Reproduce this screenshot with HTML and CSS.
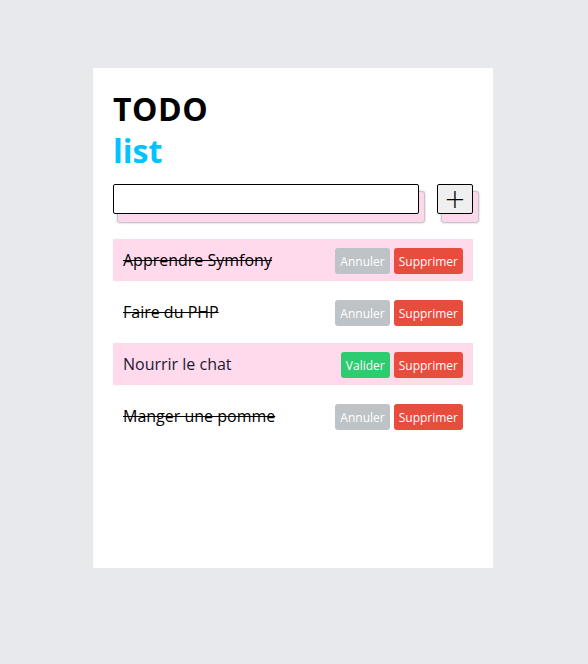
FILE: index.html
```html
<!DOCTYPE html>
<html>
<head>
<meta charset="utf-8">
<link rel="stylesheet" href="styles.css">
</head>
<body>
<div class="card">
  <h1 class="title"><span class="todo">TODO</span><span class="list">list</span></h1>
  <form class="add">
    <input class="field" type="text">
    <button class="plus" type="button">+</button>
  </form>
  <ul class="items">
    <li class="item pink done"><span class="label">Apprendre Symfony</span><span class="actions"><button class="btn grey">Annuler</button><button class="btn red">Supprimer</button></span></li>
    <li class="item done"><span class="label">Faire du PHP</span><span class="actions"><button class="btn grey">Annuler</button><button class="btn red">Supprimer</button></span></li>
    <li class="item pink"><span class="label">Nourrir le chat</span><span class="actions"><button class="btn green">Valider</button><button class="btn red">Supprimer</button></span></li>
    <li class="item done"><span class="label">Manger une pomme</span><span class="actions"><button class="btn grey">Annuler</button><button class="btn red">Supprimer</button></span></li>
  </ul>
</div>
</body>
</html>
```
FILE: styles.css
```css
html, body { margin: 0; padding: 0; }
body {
  background: #e8e9ed;
  font-family: "Open Sans", sans-serif;
  padding: 68px 2px 0 0;
  min-height: 664px;
  box-sizing: border-box;
}
.card {
  width: 400px;
  height: 500px;
  box-sizing: border-box;
  margin: 0 auto;
  background: #fff;
  padding: 20px;
}
.title {
  margin: 0;
  font-size: 32px;
  line-height: 42px;
  font-weight: 700;
}
.todo { display: block; color: #000; letter-spacing: 0.5px; }
.list { display: block; color: #00c3ff; }
.add {
  display: flex;
  gap: 18px;
  margin: 12px 0 0;
}
.field {
  flex: 1;
  height: 30px;
  box-sizing: border-box;
  border: 1px solid #000;
  border-radius: 2px;
  margin: 0;
  padding: 0 4px;
  background: #fff;
  box-shadow: 5px 8px 0 #fdd8ec, 5px 8px 2px 1px rgba(0,0,0,0.3);
}
.plus {
  width: 36px;
  height: 30px;
  box-sizing: border-box;
  margin: 0;
  padding: 0;
  border: 1px solid #000;
  border-radius: 2px;
  background: #efefef;
  font-family: "DejaVu Sans", sans-serif;
  font-size: 26px;
  font-weight: 300;
  line-height: 26px;
  color: #000;
  box-shadow: 5px 8px 0 #fdd8ec, 5px 8px 2px 1px rgba(0,0,0,0.3);
}
.items {
  list-style: none;
  margin: 25px 0 0;
  padding: 0;
  display: flex;
  flex-direction: column;
  gap: 10px;
}
.item {
  height: 42px;
  display: flex;
  align-items: center;
  justify-content: space-between;
  padding: 0 10px;
  font-size: 16px;
  color: #1b1a33;
}
.pink { background: #ffd9ec; }
.done .label { text-decoration: line-through; color: #000; }
.actions { display: flex; gap: 4px; padding-top: 2px; }
.btn {
  height: 26px;
  border: 0;
  border-radius: 3px;
  padding: 0 5px;
  font-family: "Open Sans", sans-serif;
  font-size: 12px;
  color: #fff;
}
.grey { background: #bdc3c7; }
.red { background: #e74c3c; }
.green { background: #2ecc71; }
```
